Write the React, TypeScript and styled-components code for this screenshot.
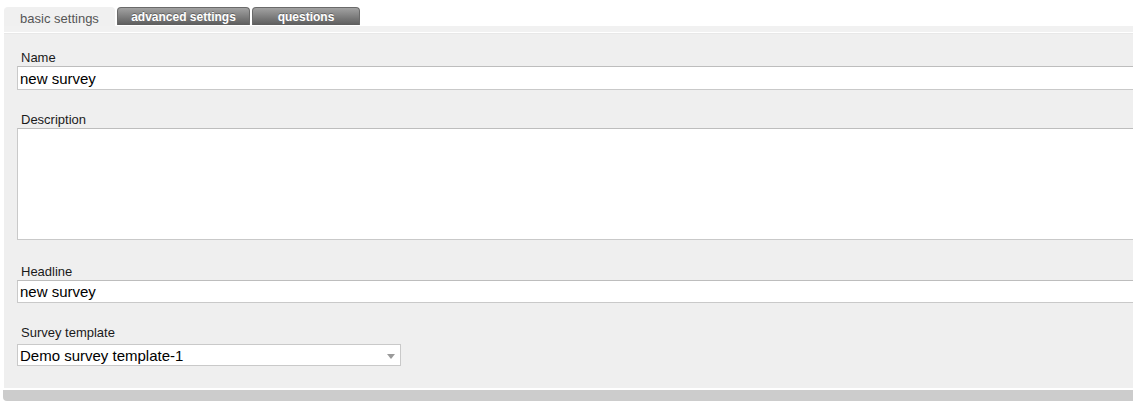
import React from 'react';
import styled, {createGlobalStyle} from 'styled-components';

const GlobalStyle = createGlobalStyle`
  body {
    margin: 0;
    background: #ffffff;
    font-family: "Liberation Sans", Arial, sans-serif;
  }
`;

const Page = styled.div`
  box-sizing: border-box;
  width: 100%;
  overflow: hidden;
  padding: 7px 0 0 4px;
`;

const TabBar = styled.div`
  display: flex;
  align-items: flex-start;
  gap: 2px;
`;

const Tab = styled.div<{$active?: boolean; $width: number}>`
  width: ${(p) => p.$width}px;
  box-sizing: border-box;
  height: ${(p) => (p.$active ? 19 : 18)}px;
  display: flex;
  align-items: center;
  justify-content: center;
  font-size: ${(p) => (p.$active ? 13 : 12)}px;
  border-radius: 4px 4px 0 0;
  color: ${(p) => (p.$active ? '#555' : '#fff')};
  font-weight: ${(p) => (p.$active ? 'normal' : 'bold')};
  background: ${(p) => (p.$active ? '#f0f0f0' : 'linear-gradient(#a2a2a2, #5c5c5c)')};
  border: 1px solid ${(p) => (p.$active ? '#f0f0f0' : '#6a6a6a')};
  border-bottom: none;
  text-shadow: ${(p) => (p.$active ? 'none' : '0 -1px 0 rgba(0,0,0,0.3)')};
  padding-top: ${(p) => (p.$active ? 2 : 0)}px;
`;

const TabStrip = styled.div`
  height: 6px;
  background: #f1f1f1;
  border-bottom: 1px solid #ffffff;
`;

const Panel = styled.div`
  display: flex;
  flex-direction: column;
  gap: 22px;
  background: #efefef;
  padding: 16px 0 22px 13px;
  border-top: 1px solid #e8e8e8;
`;

const Field = styled.div`
  display: flex;
  flex-direction: column;
  align-items: flex-start;
`;

const Label = styled.label`
  display: block;
  font-size: 13px;
  line-height: 15px;
  color: #1a1a1a;
  margin: 0 0 1px 4px;
`;

const TextInput = styled.input`
  display: block;
  box-sizing: border-box;
  width: calc(100% + 20px);
  height: ${(p) => (p.height ? `${p.height}px` : '24px')};
  border: 1px solid #c9c9c9;
  border-top-color: #bdbdbd;
  background: #fff;
  font-family: "Liberation Sans", Arial, sans-serif;
  font-size: 15px;
  color: #000;
  padding: 0 2px;
  margin: 0;
  outline: none;
`;

const TextArea = styled.textarea`
  display: block;
  box-sizing: border-box;
  width: calc(100% + 20px);
  height: 112px;
  border: 1px solid #c9c9c9;
  border-top-color: #bdbdbd;
  background: #fff;
  margin: 0 0 2px 0;
  resize: none;
  outline: none;
`;

const Select = styled.div`
  box-sizing: border-box;
  width: 384px;
  height: 22px;
  margin-top: 3px;
  background: #fff;
  border: 1px solid #c9c9c9;
  display: flex;
  align-items: center;
  justify-content: space-between;
  padding: 0 4px 0 2px;
  font-size: 15px;
  color: #000;
`;

const Arrow = styled.span`
  width: 0;
  height: 0;
  border-left: 4px solid transparent;
  border-right: 4px solid transparent;
  border-top: 5px solid #9a9a9a;
  margin-right: 1px;
  margin-top: 2px;
`;

const BottomBar = styled.div`
  height: 11px;
  margin: 2px 0 0 -1px;
  background: #cccccc;
  border-radius: 0 0 0 4px;
`;

const App = () => (
  <>
    <GlobalStyle />
    <Page>
      <TabBar>
        <Tab $active $width={111}>basic settings</Tab>
        <Tab $width={133}>advanced settings</Tab>
        <Tab $width={108}>questions</Tab>
      </TabBar>
      <TabStrip />
      <Panel>
        <Field>
          <Label>Name</Label>
          <TextInput defaultValue="new survey" />
        </Field>
        <Field>
          <Label>Description</Label>
          <TextArea />
        </Field>
        <Field>
          <Label>Headline</Label>
          <TextInput height={23} defaultValue="new survey" />
        </Field>
        <Field>
          <Label>Survey template</Label>
          <Select>
            <span>Demo survey template-1</span>
            <Arrow />
          </Select>
        </Field>
      </Panel>
      <BottomBar />
    </Page>
  </>
);

export default App;
